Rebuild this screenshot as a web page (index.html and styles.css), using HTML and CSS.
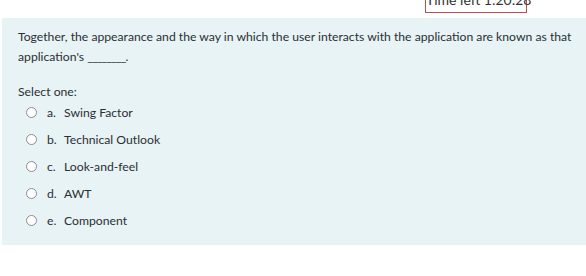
FILE: index.html
```html
<!DOCTYPE html>
<html>
<head>
    <title>Quiz question</title>
    <meta charset="UTF-8">
    <link rel="stylesheet" href="styles.css">
</head>
<body>
    <div class="timer-bar">
        <div class="timer">Time left 1:20:28</div>
    </div>

    <div class="formulation">
        <div class="qtext">
            Together, the appearance and the way in which the user interacts with the application are known as that application's <span class="blank">________</span>.
        </div>

        <div class="prompt">Select one:</div>
        <div class="answers">
            <label class="answer"><span class="radio"></span><span class="letter">a.</span><span>Swing Factor</span></label>
            <label class="answer"><span class="radio"></span><span class="letter">b.</span><span>Technical Outlook</span></label>
            <label class="answer"><span class="radio"></span><span class="letter">c.</span><span>Look-and-feel</span></label>
            <label class="answer"><span class="radio"></span><span class="letter">d.</span><span>AWT</span></label>
            <label class="answer"><span class="radio"></span><span class="letter">e.</span><span>Component</span></label>
        </div>
    </div>
</body>
</html>
```

FILE: styles.css
```css
body {
    font-family: Lato, "Open Sans", sans-serif;
    font-size: 12.2px;
    margin: 0;
    color: #2b2f33;
    background: #ffffff;
}

.timer-bar {
    height: 18px;
    display: flex;
    justify-content: flex-end;
    padding-right: 59px;
}

.timer {
    width: 100px;
    height: 20px;
    margin-top: -9px;
    border: 1px solid #b5534f;
    text-align: center;
    line-height: 16px;
    white-space: nowrap;
    font-size: 14px;
    color: #333;
}

.formulation {
    margin-left: 2px;
    background: #e7f3f5;
    padding: 9px 8px 12px 16px;
    height: 206px;
}

.qtext {
    line-height: 20px;
    margin-bottom: 18px;
}

.blank {
    letter-spacing: -0.8px;
}

.prompt {
    line-height: 14px;
}

.answers {
    padding-left: 8px;
}

.answer {
    display: flex;
    align-items: center;
    height: 27px;
}

.radio {
    width: 9px;
    height: 9px;
    border: 1px solid #8a8d90;
    border-radius: 50%;
    background: #fff;
    margin-right: 10px;
}

.letter {
    width: 17px;
}
```
